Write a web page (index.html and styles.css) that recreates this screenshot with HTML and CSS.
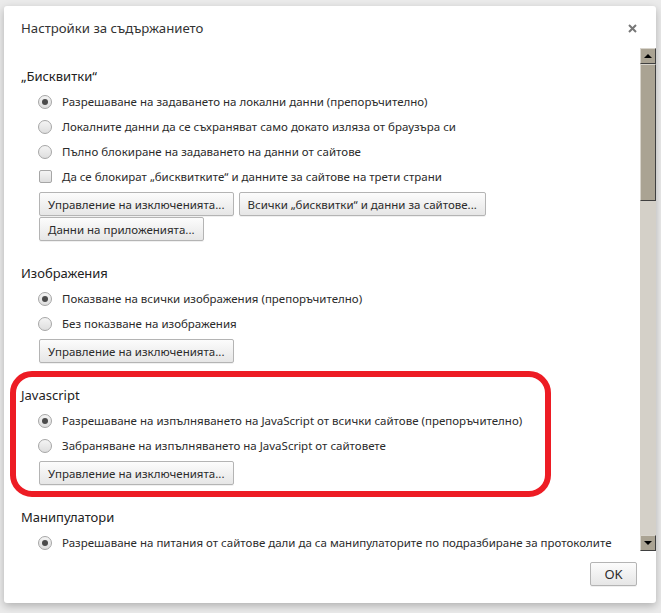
FILE: index.html
```html
<!doctype html>
<html lang="bg">
    <head>
        <meta charset="UTF-8" />
        <title>Настройки за съдържанието</title>
        <link rel="stylesheet" href="styles.css">
    </head>
    <body>
        <div class="dialog">
            <div class="dialog-header">
                <h1 class="dialog-title">Настройки за съдържанието</h1>
                <svg class="close-icon" viewBox="0 0 9 9" xmlns="http://www.w3.org/2000/svg">
                    <path d="M1 1L8 8M8 1L1 8" />
                </svg>
            </div>

            <div class="dialog-body">
                <div class="content">
                    <section class="section">
                        <h2 class="section-title">„Бисквитки“</h2>
                        <div class="option"><span class="radio checked"></span>Разрешаване на задаването на локални данни (препоръчително)</div>
                        <div class="option"><span class="radio"></span>Локалните данни да се съхраняват само докато изляза от браузъра си</div>
                        <div class="option"><span class="radio"></span>Пълно блокиране на задаването на данни от сайтове</div>
                        <div class="option"><span class="checkbox"></span>Да се блокират „бисквитките“ и данните за сайтове на трети страни</div>
                        <div class="button-group">
                            <button class="button">Управление на изключенията...</button>
                            <button class="button">Всички „бисквитки“ и данни за сайтове...</button>
                            <button class="button">Данни на приложенията...</button>
                        </div>
                    </section>

                    <section class="section">
                        <h2 class="section-title">Изображения</h2>
                        <div class="option"><span class="radio checked"></span>Показване на всички изображения (препоръчително)</div>
                        <div class="option"><span class="radio"></span>Без показване на изображения</div>
                        <div class="button-group">
                            <button class="button">Управление на изключенията...</button>
                        </div>
                    </section>

                    <section class="section highlighted">
                        <h2 class="section-title">Javascript</h2>
                        <div class="option"><span class="radio checked"></span>Разрешаване на изпълняването на JavaScript от всички сайтове (препоръчително)</div>
                        <div class="option"><span class="radio"></span>Забраняване на изпълняването на JavaScript от сайтовете</div>
                        <div class="button-group">
                            <button class="button">Управление на изключенията...</button>
                        </div>
                        <div class="highlight-frame"></div>
                    </section>

                    <section class="section">
                        <h2 class="section-title">Манипулатори</h2>
                        <div class="option"><span class="radio checked"></span>Разрешаване на питания от сайтове дали да са манипулаторите по подразбиране за протоколите</div>
                    </section>
                </div>

                <div class="scrollbar">
                    <div class="scroll-arrow up"></div>
                    <div class="scroll-thumb"></div>
                    <div class="scroll-track"></div>
                    <div class="scroll-arrow down"></div>
                </div>
            </div>

            <div class="dialog-footer">
                <button class="button ok-button">OK</button>
            </div>
        </div>
    </body>
</html>
```

FILE: styles.css
```css
/* Reset */
*,
*::before,
*::after {
    margin: 0;
    padding: 0;
    box-sizing: border-box;
}

:root {
    --text-color: #2b2b2b;
    --border-color: #b4b4b4;
    --scroll-face: #aaa393;
    --scroll-track: #d4d0c8;
    --mark-color: #ed1c24;
}

body {
    font-family: "Noto Sans", "Open Sans", sans-serif;
    font-size: 11.5px;
    color: var(--text-color);
    background: #ebebeb;
    height: 613px;
    padding: 6px 5px 10px 4px;
    overflow: hidden;
}

.dialog {
    height: 597px;
    background: white;
    border-radius: 3px;
    box-shadow: 0 3px 8px rgba(0, 0, 0, 0.25);
    display: flex;
    flex-direction: column;
}

/* Header */
.dialog-header {
    height: 42px;
    padding: 0 19px 0 17px;
    display: flex;
    align-items: center;
    justify-content: space-between;
}

.dialog-title {
    font-size: 13.2px;
    font-weight: normal;
    color: #333;
    padding-top: 2px;
}

.close-icon {
    width: 9px;
    height: 9px;
    margin-top: 3px;
    stroke: #777;
    stroke-width: 2;
}

/* Body with scroll */
.dialog-body {
    height: 503px;
    display: flex;
}

.content {
    flex: 1;
    overflow: hidden;
    padding: 18px 0 0 17px;
}

.section {
    margin-bottom: 22px;
}

.section.highlighted {
    position: relative;
}

.highlight-frame {
    position: absolute;
    top: -14px;
    left: -11px;
    width: 541px;
    height: 126px;
    border: 6px solid var(--mark-color);
    border-radius: 22px;
}

.section-title {
    font-size: 13px;
    font-weight: normal;
    line-height: 20px;
    color: #222;
    margin-bottom: 3px;
}

.option {
    height: 25px;
    display: flex;
    align-items: center;
    padding-left: 17px;
    white-space: nowrap;
}

.radio,
.checkbox {
    width: 14px;
    height: 14px;
    margin-right: 10px;
    border: 1px solid #a6a6a6;
    background: linear-gradient(#f4f4f4, #dedede);
    flex-shrink: 0;
    display: flex;
    align-items: center;
    justify-content: center;
}

.radio {
    border-radius: 50%;
}

.radio.checked::after {
    content: "";
    width: 6px;
    height: 6px;
    border-radius: 50%;
    background: #4b4b4b;
}

.checkbox {
    width: 13px;
    height: 13px;
    border-radius: 2px;
    margin-left: 1px;
}

/* Buttons */
.button-group {
    margin-top: 3px;
    padding-left: 18px;
    display: flex;
    flex-wrap: wrap;
    gap: 1px 5px;
    width: 490px;
}

.button {
    font-family: inherit;
    font-size: 11.5px;
    color: var(--text-color);
    height: 24px;
    padding: 0 8px;
    border: 1px solid var(--border-color);
    border-radius: 2px;
    background: linear-gradient(#fcfcfc, #e6e6e6);
    box-shadow: 0 1px 0 rgba(0, 0, 0, 0.06);
    white-space: nowrap;
}

/* Classic scrollbar */
.scrollbar {
    width: 16px;
    display: flex;
    flex-direction: column;
    background: var(--scroll-track);
}

.scroll-arrow,
.scroll-thumb {
    background: var(--scroll-face);
    border: 1px solid;
    border-color: #d8d4cc #404040 #404040 #d8d4cc;
}

.scroll-arrow {
    height: 16px;
    display: flex;
    align-items: center;
    justify-content: center;
}

.scroll-arrow::after {
    content: "";
    border-left: 4px solid transparent;
    border-right: 4px solid transparent;
}

.scroll-arrow.up::after {
    border-bottom: 4px solid black;
}

.scroll-arrow.down::after {
    border-top: 4px solid black;
}

.scroll-thumb {
    height: 137px;
}

.scroll-track {
    flex: 1;
}

/* Footer */
.dialog-footer {
    flex: 1;
    display: flex;
    justify-content: flex-end;
    align-items: flex-start;
    padding: 11px 19px 0 0;
}

.ok-button {
    width: 47px;
    height: 24px;
    font-size: 13px;
}
```
